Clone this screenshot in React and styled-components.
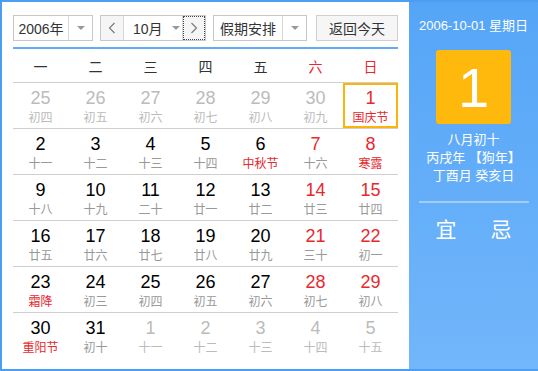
import React from "react";
import styled, { createGlobalStyle } from "styled-components";

const GlobalStyle = createGlobalStyle`
  html, body {
    margin: 0;
    padding: 0;
    background: #fff;
  }
  body {
    font-family: "Liberation Sans", "Noto Sans CJK SC", sans-serif;
  }
`;

const RED = "#e8282e";

const Frame = styled.div`
  display: flex;
  width: 538px;
  height: 371px;
  box-sizing: border-box;
  border: 2px solid #4c9ef5;
  border-right: none;
  background: #fff;
`;

const Main = styled.div`
  width: 407px;
  box-sizing: border-box;
  padding: 0 11px;
  display: flex;
  flex-direction: column;
`;

const Toolbar = styled.div`
  display: flex;
  align-items: center;
  height: 47px;
  box-sizing: border-box;
  padding-top: 7px;
  border-bottom: 2px solid #62abf6;
`;

const Select = styled.div`
  display: flex;
  width: ${(p) => p.w}px;
  height: 26px;
  box-sizing: border-box;
  border: 1px solid #c8c8c8;
  margin-right: ${(p) => p.mr || 0}px;
  background: #fff;
  font-size: 14px;
  color: #333;
`;

const SelectLabel = styled.div`
  flex: 1;
  display: flex;
  align-items: center;
  justify-content: center;
`;

const SelectArrow = styled.div`
  width: 23px;
  border-left: 1px solid #d6d6d6;
  display: flex;
  align-items: center;
  justify-content: center;
  &::after {
    content: "";
    border-left: 4px solid transparent;
    border-right: 4px solid transparent;
    border-top: 4px solid #999;
  }
`;

const MonthGroup = styled.div`
  display: flex;
  height: 26px;
  box-sizing: border-box;
  border: 1px solid #c8c8c8;
  margin-right: 7px;
`;

const StepButton = styled.div`
  width: ${(p) => p.w}px;
  display: flex;
  align-items: center;
  justify-content: center;
  background: #f5f5f5;
  box-sizing: border-box;
  ${(p) => (p.focus ? "outline: 1px dotted #444; outline-offset: -1px;" : "")}
`;

const MonthSelect = styled.div`
  width: 60px;
  display: flex;
  align-items: center;
  border-left: 1px solid #d6d6d6;
  border-right: 1px solid #d6d6d6;
  background: #fff;
  font-size: 14px;
  color: #333;
  padding-left: 9px;
  box-sizing: border-box;
  &::after {
    content: "";
    margin-left: 9px;
    border-left: 4px solid transparent;
    border-right: 4px solid transparent;
    border-top: 4px solid #999;
  }
`;

const TodayButton = styled.div`
  margin-left: auto;
  width: 82px;
  height: 26px;
  box-sizing: border-box;
  border: 1px solid #cfcfcf;
  background: #f6f6f6;
  display: flex;
  align-items: center;
  justify-content: center;
  font-size: 14px;
  color: #333;
`;

const WeekHead = styled.div`
  display: grid;
  grid-template-columns: repeat(7, 55px);
  height: 34px;
  box-sizing: border-box;
  border-bottom: 1px solid #cfcfcf;
`;

const WeekDay = styled.div`
  display: flex;
  align-items: center;
  justify-content: center;
  font-size: 14px;
  color: ${(p) => (p.weekend ? RED : "#333")};
`;

const Row = styled.div`
  display: grid;
  grid-template-columns: repeat(7, 55px);
  height: 46px;
  box-sizing: border-box;
  border-bottom: ${(p) => (p.last ? "none" : "1px solid #cfcfcf")};
`;

const Cell = styled.div`
  display: flex;
  flex-direction: column;
  align-items: center;
  box-sizing: border-box;
  padding-top: 5px;
  ${(p) => (p.selected ? "box-shadow: inset 0 0 0 2px #fbb40a;" : "")}
`;

const DayNum = styled.div`
  font-size: 18px;
  line-height: 21px;
  color: ${(p) => p.color};
`;

const Lunar = styled.div`
  font-size: 12px;
  line-height: 16px;
  margin-top: 1px;
  color: ${(p) => p.color};
`;

const Panel = styled.div`
  flex: 1;
  background: linear-gradient(#55a5f7, #72b6fb);
  display: flex;
  flex-direction: column;
  align-items: center;
  color: #fff;
`;

const PanelDate = styled.div`
  font-size: 13px;
  margin-top: 15px;
  line-height: 18px;
`;

const BigDay = styled.div`
  width: 75px;
  height: 74px;
  margin-top: 15px;
  border-radius: 3px;
  background: #ffb80c;
  display: flex;
  align-items: center;
  justify-content: center;
  font-size: 56px;
  font-family: "Liberation Sans", sans-serif;
`;

const LunarInfo = styled.div`
  margin-top: 7px;
  font-size: 13px;
  line-height: 18px;
  text-align: center;
`;

const Divider = styled.div`
  align-self: stretch;
  margin: 16px 9px 0 10px;
  height: 2px;
  background: #a3cdf8;
`;

const YiJi = styled.div`
  display: flex;
  gap: 34px;
  margin-top: 14px;
  font-size: 21px;
  line-height: 26px;
`;

const Chevron = ({ dir }) => (
  <svg width="8" height="12" viewBox="0 0 8 12">
    <path
      d={dir === "left" ? "M6.5 1 L1.5 6 L6.5 11" : "M1.5 1 L6.5 6 L1.5 11"}
      fill="none"
      stroke="#777"
      strokeWidth="1.1"
    />
  </svg>
);

// [day, lunar, inMonth, lunarRed]
const weeks = [
  [[25, "初四"], [26, "初五"], [27, "初六"], [28, "初七"], [29, "初八"], [30, "初九"], [1, "国庆节", 1, 1]],
  [[2, "十一", 1], [3, "十二", 1], [4, "十三", 1], [5, "十四", 1], [6, "中秋节", 1, 1], [7, "十六", 1], [8, "寒露", 1, 1]],
  [[9, "十八", 1], [10, "十九", 1], [11, "二十", 1], [12, "廿一", 1], [13, "廿二", 1], [14, "廿三", 1], [15, "廿四", 1]],
  [[16, "廿五", 1], [17, "廿六", 1], [18, "廿七", 1], [19, "廿八", 1], [20, "廿九", 1], [21, "三十", 1], [22, "初一", 1]],
  [[23, "霜降", 1, 1], [24, "初三", 1], [25, "初四", 1], [26, "初五", 1], [27, "初六", 1], [28, "初七", 1], [29, "初八", 1]],
  [[30, "重阳节", 1, 1], [31, "初十", 1], [1, "十一"], [2, "十二"], [3, "十三"], [4, "十四"], [5, "十五"]],
];

const weekNames = ["一", "二", "三", "四", "五", "六", "日"];

const App = () => (
  <>
    <GlobalStyle />
    <Frame>
      <Main>
        <Toolbar>
          <Select w={80} mr={7}>
            <SelectLabel>2006年</SelectLabel>
            <SelectArrow />
          </Select>
          <MonthGroup>
            <StepButton w={22}>
              <Chevron dir="left" />
            </StepButton>
            <MonthSelect>10月</MonthSelect>
            <StepButton w={22} focus>
              <Chevron dir="right" />
            </StepButton>
          </MonthGroup>
          <Select w={94}>
            <SelectLabel>假期安排</SelectLabel>
            <SelectArrow />
          </Select>
          <TodayButton>返回今天</TodayButton>
        </Toolbar>
        <WeekHead>
          {weekNames.map((n, i) => (
            <WeekDay key={n} weekend={i > 4}>
              {n}
            </WeekDay>
          ))}
        </WeekHead>
        {weeks.map((week, r) => (
          <Row key={r} last={r === weeks.length - 1}>
            {week.map(([d, lunar, inMonth, red], c) => {
              const numColor = !inMonth ? "#bbb" : c > 4 ? RED : "#000";
              const lunarColor = red ? RED : inMonth ? "#999" : "#bbb";
              return (
                <Cell key={c} selected={r === 0 && c === 6}>
                  <DayNum color={r === 0 && c === 6 ? RED : numColor}>{d}</DayNum>
                  <Lunar color={lunarColor}>{lunar}</Lunar>
                </Cell>
              );
            })}
          </Row>
        ))}
      </Main>
      <Panel>
        <PanelDate>2006-10-01 星期日</PanelDate>
        <BigDay>1</BigDay>
        <LunarInfo>
          八月初十
          <br />
          丙戌年 【狗年】
          <br />
          丁酉月 癸亥日
        </LunarInfo>
        <Divider />
        <YiJi>
          <span>宜</span>
          <span>忌</span>
        </YiJi>
      </Panel>
    </Frame>
  </>
);

export default App;
